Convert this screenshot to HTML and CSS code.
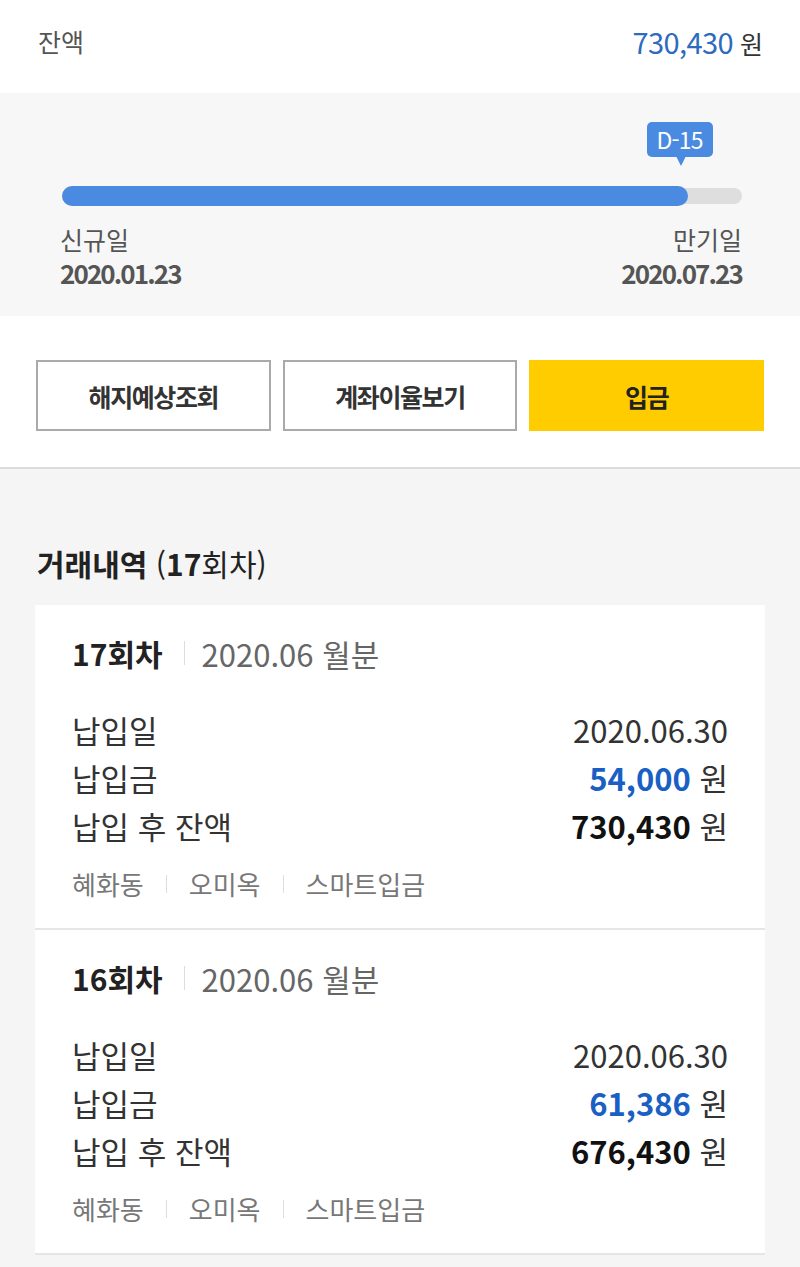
FILE: index.html
```html
<!DOCTYPE html>
<html lang="ko">
<head>
<meta charset="utf-8">
<link rel="stylesheet" href="styles.css">
</head>
<body>
<div class="balance">
  <span class="balance-label">잔액</span>
  <span class="balance-value"><span class="num">730,430</span> 원</span>
</div>

<div class="progress">
  <div class="track">
    <div class="fill" style="width: 92%;">
      <span class="badge">D-15</span>
    </div>
  </div>
  <div class="dates">
    <div class="date-col">
      <div class="date-label">신규일</div>
      <div class="date-value">2020.01.23</div>
    </div>
    <div class="date-col right">
      <div class="date-label">만기일</div>
      <div class="date-value">2020.07.23</div>
    </div>
  </div>
</div>

<div class="actions">
  <button class="btn">해지예상조회</button>
  <button class="btn">계좌이율보기</button>
  <button class="btn primary">입금</button>
</div>

<div class="history">
  <h2 class="history-title"><b>거래내역</b> (<b>17</b>회차)</h2>
  <div class="card">
    <div class="item">
      <div class="item-head"><span class="round">17회차</span><span class="vbar"></span><span class="period">2020.06 월분</span></div>
      <div class="rows">
        <div class="row"><span>납입일</span><span>2020.06.30</span></div>
        <div class="row"><span>납입금</span><span><span class="blue">54,000</span> 원</span></div>
        <div class="row"><span>납입 후 잔액</span><span><b class="strong">730,430</b> 원</span></div>
      </div>
      <div class="meta"><span>혜화동</span><span class="sep"></span><span>오미옥</span><span class="sep"></span><span>스마트입금</span></div>
    </div>
    <div class="item">
      <div class="item-head"><span class="round">16회차</span><span class="vbar"></span><span class="period">2020.06 월분</span></div>
      <div class="rows">
        <div class="row"><span>납입일</span><span>2020.06.30</span></div>
        <div class="row"><span>납입금</span><span><span class="blue">61,386</span> 원</span></div>
        <div class="row"><span>납입 후 잔액</span><span><b class="strong">676,430</b> 원</span></div>
      </div>
      <div class="meta"><span>혜화동</span><span class="sep"></span><span>오미옥</span><span class="sep"></span><span>스마트입금</span></div>
    </div>
  </div>
</div>
</body>
</html>
```

FILE: styles.css
```css
* { box-sizing: border-box; }
html, body { margin: 0; padding: 0; }
body {
  font-family: "Noto Sans CJK KR", "Noto Sans", sans-serif;
  background: #f5f5f5;
  color: #333;
  overflow: hidden;
}

.balance {
  height: 93px;
  background: #fff;
  display: flex;
  justify-content: space-between;
  align-items: center;
  padding: 0 37px 12px 38px;
  font-size: 25px;
}
.balance-label { color: #555; }
.balance-value { color: #333; }
.balance-value .num { color: #2e6bbd; font-size: 29px; letter-spacing: -0.6px; }

.progress {
  background: #f7f7f7;
  padding: 95px 58px 26px 60px;
}
.track {
  position: relative;
  height: 16px;
  margin: 0 0 0 2px;
  background: #dedede;
  border-radius: 8px;
}
.fill {
  position: relative;
  height: 20px;
  top: -2px;
  background: #4a8ae0;
  border-radius: 10px;
}
.badge {
  position: absolute;
  right: -25px;
  top: -64px;
  width: 66px;
  height: 35px;
  background: #4a8ae0;
  color: #fff;
  border-radius: 5px;
  font-size: 23px;
  line-height: 35px;
  text-align: center;
  letter-spacing: -0.8px;
}
.badge::after {
  content: "";
  position: absolute;
  left: 29px;
  bottom: -9px;
  border-left: 5px solid transparent;
  border-right: 5px solid transparent;
  border-top: 10px solid #4a8ae0;
}
.dates {
  display: flex;
  justify-content: space-between;
  margin-top: 18px;
}
.date-col.right { text-align: right; }
.date-label { font-size: 25px; line-height: 34px; color: #555; }
.date-value { font-size: 26px; line-height: 34px; color: #555; font-weight: 700; letter-spacing: -1.9px; }

.actions {
  background: #fff;
  display: flex;
  gap: 12px;
  padding: 44px 36px 36px;
  border-bottom: 2px solid #dcdcdc;
}
.btn {
  flex: 1;
  height: 71px;
  border: 2px solid #aaa;
  background: #fff;
  font-family: inherit;
  font-size: 25px;
  font-weight: 700;
  color: #333;
  letter-spacing: -1.4px;
}
.btn.primary { background: #ffcc00; border-color: #ffcc00; color: #222; }

.history { padding: 74px 35px 0; }
.history-title {
  margin: 0 0 22px 2px;
  font-size: 30px;
  line-height: 40px;
  font-weight: 400;
  color: #222;
}
.history-title b { font-weight: 700; }

.card { background: #fff; }
.item {
  padding: 28px 37px 27px;
  border-bottom: 2px solid #e6e6e6;
}
.item-head {
  display: flex;
  align-items: center;
  height: 40px;
  font-size: 30px;
}
.round { font-weight: 700; color: #222; }
.vbar { width: 1px; height: 24px; background: #ddd; margin: 0 17px 0 21px; }
.period { color: #666; font-size: 31px; }
.rows { margin-top: 33px; }
.row {
  display: flex;
  justify-content: space-between;
  font-size: 31px;
  line-height: 48px;
  color: #333;
}
.blue { color: #1a5fc4; font-weight: 700; }
.strong { color: #111; font-weight: 700; }
.meta {
  display: flex;
  align-items: center;
  margin-top: 17px;
  font-size: 26px;
  line-height: 34px;
  color: #777;
}
.sep { width: 1px; height: 18px; background: #ddd; margin: 0 22px; }
```
